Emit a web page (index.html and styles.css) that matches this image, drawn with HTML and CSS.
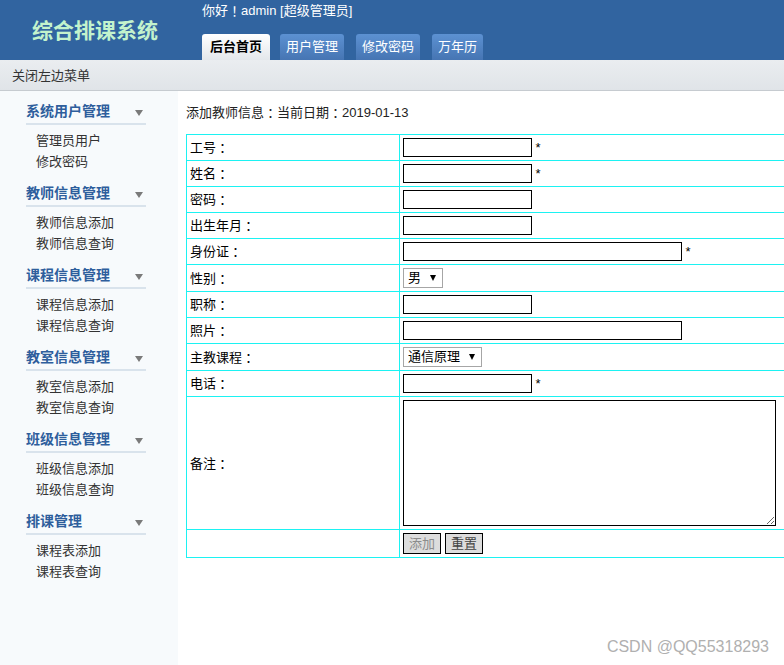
FILE: index.html
```html
<!DOCTYPE html>
<html lang="zh-CN">
<head>
<meta charset="utf-8">
<title>综合排课系统</title>
<link rel="stylesheet" href="styles.css">
</head>
<body>
<div class="page">
  <header class="top">
    <div class="logo">综合排课系统</div>
    <div class="top-right">
      <div class="greet">你好<span class="fw">！</span>admin [超级管理员]</div>
      <nav class="tabs">
        <a class="tab active">后台首页</a>
        <a class="tab">用户管理</a>
        <a class="tab">修改密码</a>
        <a class="tab">万年历</a>
      </nav>
    </div>
  </header>
  <div class="subbar">关闭左边菜单</div>
  <div class="body">
    <aside class="side">
      <section class="grp">
        <h3 class="grp-title">系统用户管理<span class="caret"></span></h3>
        <ul class="grp-list"><li>管理员用户</li><li>修改密码</li></ul>
      </section>
      <section class="grp">
        <h3 class="grp-title">教师信息管理<span class="caret"></span></h3>
        <ul class="grp-list"><li>教师信息添加</li><li>教师信息查询</li></ul>
      </section>
      <section class="grp">
        <h3 class="grp-title">课程信息管理<span class="caret"></span></h3>
        <ul class="grp-list"><li>课程信息添加</li><li>课程信息查询</li></ul>
      </section>
      <section class="grp">
        <h3 class="grp-title">教室信息管理<span class="caret"></span></h3>
        <ul class="grp-list"><li>教室信息添加</li><li>教室信息查询</li></ul>
      </section>
      <section class="grp">
        <h3 class="grp-title">班级信息管理<span class="caret"></span></h3>
        <ul class="grp-list"><li>班级信息添加</li><li>班级信息查询</li></ul>
      </section>
      <section class="grp">
        <h3 class="grp-title">排课管理<span class="caret"></span></h3>
        <ul class="grp-list"><li>课程表添加</li><li>课程表查询</li></ul>
      </section>
    </aside>
    <main class="main">
      <p class="info">添加教师信息<span class="fw">：</span>当前日期<span class="fw">：</span>2019-01-13</p>
      <table class="form">
        <colgroup><col class="c-label"><col class="c-field"></colgroup>
        <tr><td>工号<span class="fw">：</span></td><td><input class="in" type="text"> *</td></tr>
        <tr><td>姓名<span class="fw">：</span></td><td><input class="in" type="text"> *</td></tr>
        <tr><td>密码<span class="fw">：</span></td><td><input class="in" type="password"></td></tr>
        <tr><td>出生年月<span class="fw">：</span></td><td><input class="in" type="text"></td></tr>
        <tr><td>身份证<span class="fw">：</span></td><td><input class="in long" type="text"> *</td></tr>
        <tr><td>性别<span class="fw">：</span></td><td><span class="sel"><select><option>男</option><option>女</option></select></span></td></tr>
        <tr><td>职称<span class="fw">：</span></td><td><input class="in" type="text"></td></tr>
        <tr><td>照片<span class="fw">：</span></td><td><input class="in long" type="text"></td></tr>
        <tr><td>主教课程<span class="fw">：</span></td><td><span class="sel"><select><option>通信原理</option></select></span></td></tr>
        <tr><td>电话<span class="fw">：</span></td><td><input class="in" type="text"> *</td></tr>
        <tr><td>备注<span class="fw">：</span></td><td><textarea class="ta"></textarea></td></tr>
        <tr><td></td><td><button class="btn btn-add" type="button">添加</button><button class="btn" type="button">重置</button></td></tr>
      </table>
    </main>
  </div>
  <div class="watermark">CSDN @QQ55318293</div>
</div>
</body>
</html>
```
FILE: styles.css
```css
html, body {
  margin: 0;
  padding: 0;
  overflow: hidden;
}
body {
  font-family: "Liberation Sans", "Noto Sans CJK SC", sans-serif;
  font-size: 13px;
  color: #222;
  background: #fff;
}
.fw {
  font-family: "Noto Sans CJK TC", sans-serif;
  font-feature-settings: "locl" 0;
  vertical-align: top;
}
.page {
  position: relative;
  min-height: 100vh;
  display: flex;
  flex-direction: column;
}
.top {
  height: 60px;
  background: #3164a0;
  display: flex;
}
.logo {
  width: 190px;
  height: 60px;
  display: flex;
  align-items: center;
  justify-content: center;
  padding-bottom: 2px;
  box-sizing: border-box;
  color: #c3f3cd;
  font-size: 21px;
  font-weight: bold;
  font-family: "Noto Sans CJK SC", sans-serif;
}
.top-right {
  margin-left: 12px;
  display: flex;
  flex-direction: column;
}
.greet {
  color: #fff;
  font-size: 13px;
  line-height: 22px;
  height: 22px;
}
.tabs {
  margin-top: 12px;
  display: flex;
  height: 26px;
}
.tab {
  display: block;
  height: 26px;
  line-height: 26px;
  padding: 0 6px;
  margin-right: 12px;
  border-radius: 3px 3px 0 0;
  background: linear-gradient(#5c91d2, #4675b3);
  color: #fff;
  font-size: 13px;
}
.tab.active {
  padding: 0 8px;
  margin-right: 10px;
  background: linear-gradient(#ffffff, #e3e7eb);
  color: #000;
  font-weight: bold;
}
.subbar {
  height: 30px;
  line-height: 31px;
  padding-left: 12px;
  background: linear-gradient(#eaedf0, #e0e4e8);
  border-bottom: 1px solid #c6cbd0;
  color: #333;
  font-size: 13px;
}
.body {
  flex: 1;
  display: flex;
}
.side {
  width: 178px;
  flex: none;
  background: #f7fafc;
  padding: 10px 0 0 26px;
  box-sizing: border-box;
}
.grp {
  width: 120px;
  margin-bottom: 11px;
}
.grp-title {
  margin: 0;
  height: 22px;
  line-height: 20px;
  padding-right: 3px;
  border-bottom: 2px solid #d9e3ec;
  box-sizing: content-box;
  font-size: 14px;
  font-weight: bold;
  color: #2e5e9c;
  display: flex;
  justify-content: space-between;
  align-items: flex-start;
}
.caret {
  width: 0;
  height: 0;
  margin-top: 9px;
  border-left: 4px solid transparent;
  border-right: 4px solid transparent;
  border-top: 6px solid #7a7a7a;
}
.grp-list {
  list-style: none;
  margin: 5px 0 0;
  padding: 0 0 0 10px;
}
.grp-list li {
  line-height: 21px;
  height: 21px;
  font-size: 13px;
  color: #333;
}
.main {
  flex: 1;
  min-width: 0;
  overflow: hidden;
  padding: 13px 0 0 8px;
}
.info {
  margin: 0 0 12px;
  line-height: 18px;
  height: 18px;
  font-size: 13px;
  color: #222;
}
.form {
  border-collapse: collapse;
  table-layout: fixed;
  width: 640px;
}
.c-label { width: 213px; }
.form td {
  border: 1px solid #1cf2f2;
  padding: 3px 3px;
  line-height: 19px;
  font-size: 13px;
  color: #000;
  vertical-align: middle;
}
.in {
  box-sizing: border-box;
  width: 129px;
  height: 19px;
  border: 1px solid #000;
  padding: 0 2px;
  margin: 0;
  vertical-align: top;
  font-size: 13px;
}
.in.long { width: 279px; }
.sel {
  position: relative;
  display: inline-block;
  vertical-align: top;
}
.sel select {
  -webkit-appearance: none;
  appearance: none;
  height: 20px;
  margin: 0;
  padding: 0 20px 0 4px;
  border: 1px solid #a6a6a6;
  border-radius: 0;
  background: #fff;
  color: #000;
  font-family: "Liberation Sans", "Noto Sans CJK SC", sans-serif;
  font-size: 13px;
  line-height: 18px;
}
.sel::after {
  content: "";
  position: absolute;
  right: 7px;
  top: 7px;
  width: 0;
  height: 0;
  border-left: 3.5px solid transparent;
  border-right: 3.5px solid transparent;
  border-top: 6px solid #000;
  pointer-events: none;
}
.ta {
  display: block;
  box-sizing: border-box;
  width: 373px;
  height: 126px;
  margin: 0;
  border: 1px solid #000;
  resize: both;
}
.btn {
  box-sizing: border-box;
  width: 38px;
  height: 21px;
  margin: 0 4px 0 0;
  padding: 0;
  border: 1px solid #000;
  background: #dddddd;
  color: #444;
  font-family: "Liberation Sans", "Noto Sans CJK SC", sans-serif;
  font-size: 13px;
  line-height: 19px;
  vertical-align: top;
}
.btn-add { color: #8c8c8c; }
.watermark {
  position: absolute;
  right: 15px;
  bottom: 8px;
  color: #b0b0b0;
  font-size: 16px;
  line-height: 20px;
}
```
